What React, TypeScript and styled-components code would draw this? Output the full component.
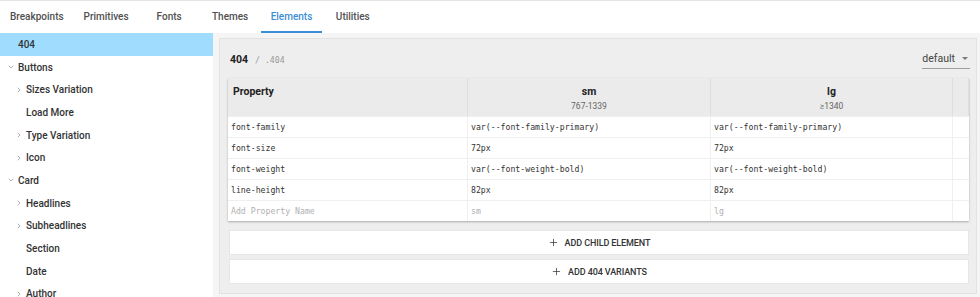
import styled, { createGlobalStyle } from 'styled-components';
import { ChevronDown, ChevronRight, Plus } from 'lucide-react';

const GlobalStyle = createGlobalStyle`
  body {
    margin: 0;
    font-family: Roboto, 'Liberation Sans', sans-serif;
    color: #333;
    background: #fff;
  }
`;

const Page = styled.div`
  width: 980px;
  height: 297px;
  display: flex;
  flex-direction: column;
  overflow: hidden;
`;

const Tabs = styled.nav`
  height: 33px;
  display: flex;
  border-top: 1px solid #e4e4e4;
  box-sizing: border-box;
  flex-shrink: 0;
`;

const Tab = styled.div<{ $active?: boolean }>`
  min-width: 61px;
  padding: 0 10px;
  box-sizing: border-box;
  display: flex;
  align-items: center;
  justify-content: center;
  font-size: 10px;
  font-weight: 500;
  color: ${(p) => (p.$active ? '#3b8ed6' : '#505050')};
  border-bottom: 2px solid ${(p) => (p.$active ? '#3b8ed6' : 'transparent')};
`;

const Body = styled.div`
  flex: 1;
  display: flex;
  min-height: 0;
`;

const Sidebar = styled.aside`
  width: 213px;
  flex-shrink: 0;
  background: #fff;
`;

const TreeRow = styled.div<{ $level: number; $selected?: boolean }>`
  height: 22.7px;
  display: flex;
  align-items: center;
  padding-left: ${(p) => 4 + p.$level * 8}px;
  font-size: 10px;
  font-weight: 500;
  color: #333;
  background: ${(p) => (p.$selected ? '#9fdcfd' : 'transparent')};
`;

const Caret = styled.span`
  width: 14px;
  display: flex;
  align-items: center;
  justify-content: center;
  color: #888;
`;

const Main = styled.main`
  flex: 1;
  background: #f5f5f5;
  padding: 5px 3px 0 6px;
`;

const Panel = styled.section`
  background: #eeeeee;
  border: 1px solid #e2e2e2;
  padding: 6px 7px 10px 8px;
  display: flex;
  flex-direction: column;
`;

const TitleRow = styled.div`
  height: 28px;
  display: flex;
  align-items: center;
  justify-content: space-between;
  margin-bottom: 5px;
`;

const Title = styled.div`
  display: flex;
  align-items: baseline;
  gap: 7px;
  padding-left: 2px;
  font-size: 10.5px;
  font-weight: 700;
  color: #222;
`;

const Path = styled.span`
  font-family: 'DejaVu Sans Mono', monospace;
  font-size: 8.2px;
  font-weight: 400;
  color: #999;
`;

const Select = styled.div`
  display: flex;
  align-items: center;
  gap: 7px;
  height: 18px;
  padding: 0 2px 0 0;
  margin-right: -1px;
  border-bottom: 1px solid #9e9e9e;
  font-size: 10.5px;
  color: #444;
`;

const Arrow = styled.span`
  width: 0;
  height: 0;
  border-left: 3px solid transparent;
  border-right: 3px solid transparent;
  border-top: 3px solid #777;
`;

const Table = styled.div`
  display: grid;
  grid-template-columns: 240px 243px 242px 1fr;
  background: #fff;
  box-shadow: 0 1px 2px rgba(0, 0, 0, 0.28);
`;

const HeadCell = styled.div<{ $center?: boolean }>`
  height: 38px;
  box-sizing: border-box;
  background: #ebebeb;
  border-right: 1px solid #dedede;
  padding: 7px 5px 0;
  display: flex;
  flex-direction: column;
  align-items: ${(p) => (p.$center ? 'center' : 'flex-start')};
  &:last-child {
    border-right: none;
  }
`;

const HeadLabel = styled.div`
  font-size: 10.5px;
  font-weight: 700;
  color: #222;
`;

const HeadRange = styled.div`
  margin-top: 3px;
  font-size: 8.5px;
  color: #666;
`;

const Cell = styled.div<{ $placeholder?: boolean }>`
  height: 21px;
  box-sizing: border-box;
  border-top: 1px solid #efefef;
  border-right: 1px solid #efefef;
  padding: 0 3px;
  display: flex;
  align-items: center;
  font-family: 'DejaVu Sans Mono', monospace;
  font-size: 8.2px;
  color: ${(p) => (p.$placeholder ? '#b0b0b0' : '#333')};
  &:nth-child(4n) {
    border-right: none;
  }
`;

const AddButton = styled.button`
  margin: 0 1px 0 2px;
  height: 23px;
  border: none;
  background: #fff;
  box-shadow: 0 0 0 1px #e6e6e6;
  display: flex;
  align-items: center;
  justify-content: center;
  gap: 6px;
  font-family: Roboto, 'Liberation Sans', sans-serif;
  font-size: 9px;
  font-weight: 500;
  letter-spacing: -0.1px;
  color: #333;
  text-transform: uppercase;
  & + & {
    margin-top: 6px;
  }
`;

const ButtonArea = styled.div`
  margin-top: 10px;
  display: flex;
  flex-direction: column;
`;

type Node = { label: string; level: number; caret?: 'open' | 'closed'; selected?: boolean };

const tree: Node[] = [
  { label: '404', level: 0, selected: true },
  { label: 'Buttons', level: 0, caret: 'open' },
  { label: 'Sizes Variation', level: 1, caret: 'closed' },
  { label: 'Load More', level: 1 },
  { label: 'Type Variation', level: 1, caret: 'closed' },
  { label: 'Icon', level: 1, caret: 'closed' },
  { label: 'Card', level: 0, caret: 'open' },
  { label: 'Headlines', level: 1, caret: 'closed' },
  { label: 'Subheadlines', level: 1, caret: 'closed' },
  { label: 'Section', level: 1 },
  { label: 'Date', level: 1 },
  { label: 'Author', level: 1, caret: 'closed' },
];

const rows = [
  ['font-family', 'var(--font-family-primary)', 'var(--font-family-primary)'],
  ['font-size', '72px', '72px'],
  ['font-weight', 'var(--font-weight-bold)', 'var(--font-weight-bold)'],
  ['line-height', '82px', '82px'],
];

const tabs = ['Breakpoints', 'Primitives', 'Fonts', 'Themes', 'Elements', 'Utilities'];

export default function App() {
  return (
    <Page>
      <GlobalStyle />
      <Tabs>
        {tabs.map((t) => (
          <Tab key={t} $active={t === 'Elements'}>
            {t}
          </Tab>
        ))}
      </Tabs>
      <Body>
        <Sidebar>
          {tree.map((n) => (
            <TreeRow key={n.label} $level={n.level} $selected={n.selected}>
              <Caret>
                {n.caret === 'open' && <ChevronDown size={8} strokeWidth={2} />}
                {n.caret === 'closed' && <ChevronRight size={8} strokeWidth={2} />}
              </Caret>
              {n.label}
            </TreeRow>
          ))}
        </Sidebar>
        <Main>
          <Panel>
            <TitleRow>
              <Title>
                404 <Path>/ .404</Path>
              </Title>
              <Select>
                default <Arrow />
              </Select>
            </TitleRow>
            <Table>
              <HeadCell>
                <HeadLabel>Property</HeadLabel>
              </HeadCell>
              <HeadCell $center>
                <HeadLabel>sm</HeadLabel>
                <HeadRange>767-1339</HeadRange>
              </HeadCell>
              <HeadCell $center>
                <HeadLabel>lg</HeadLabel>
                <HeadRange>≥1340</HeadRange>
              </HeadCell>
              <HeadCell />
              {rows.map((r) => (
                <>
                  <Cell key={r[0] + 'p'}>{r[0]}</Cell>
                  <Cell key={r[0] + 's'}>{r[1]}</Cell>
                  <Cell key={r[0] + 'l'}>{r[2]}</Cell>
                  <Cell key={r[0] + 'x'} />
                </>
              ))}
              <Cell $placeholder>Add Property Name</Cell>
              <Cell $placeholder>sm</Cell>
              <Cell $placeholder>lg</Cell>
              <Cell />
            </Table>
            <ButtonArea>
              <AddButton>
                <Plus size={11} strokeWidth={1.6} />
                Add child element
              </AddButton>
              <AddButton>
                <Plus size={11} strokeWidth={1.6} />
                Add 404 variants
              </AddButton>
            </ButtonArea>
          </Panel>
        </Main>
      </Body>
    </Page>
  );
}
